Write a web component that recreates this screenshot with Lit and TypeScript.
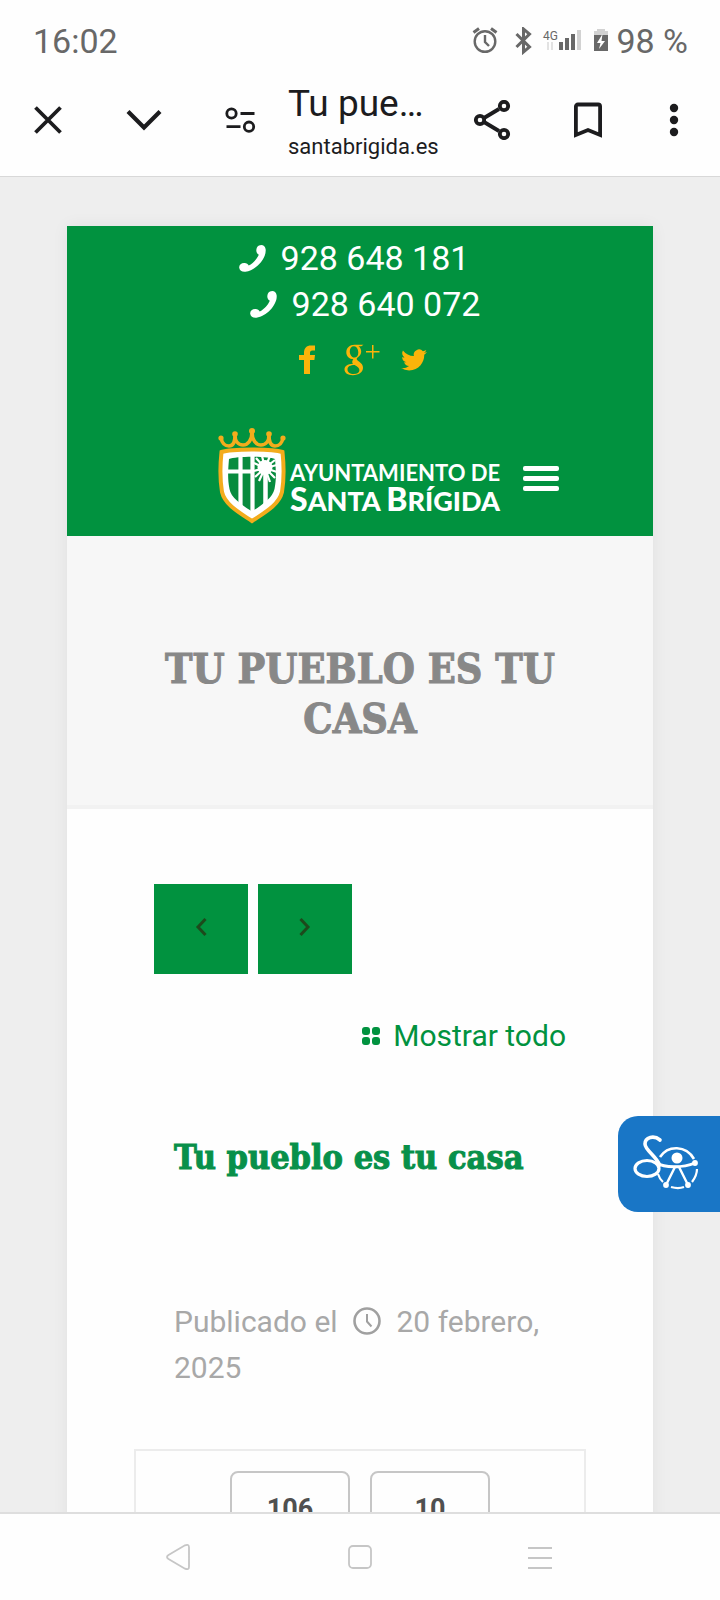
import { LitElement, html, css } from "lit";
import { customElement } from "lit/decorators.js";

const icon = css`
  :host {
    display: block;
  }
  * {
    box-sizing: border-box;
  }
  svg {
    display: block;
    flex: none;
  }
  button {
    border: 0;
    padding: 0;
    margin: 0;
    background: none;
    color: inherit;
    font: inherit;
    display: flex;
    align-items: center;
    justify-content: center;
    cursor: pointer;
  }
  a {
    color: inherit;
    text-decoration: none;
  }
`;

@customElement("status-bar")
class StatusBar extends LitElement {
  static styles = [
    icon,
    css`
      .bar {
        display: flex;
        align-items: center;
        justify-content: space-between;
        height: 64px;
        padding: 18px 32px 0 33px;
        font-size: 34px;
        line-height: 46px;
        color: #686868;
      }
      .icons {
        display: flex;
        align-items: center;
        gap: 8px;
      }
    `,
  ];
  render() {
    return html`
      <div class="bar">
        <time>16:02</time>
        <div class="icons">
          <svg width="136" height="28" viewBox="472 27 136 28" fill="none" stroke="#686868" stroke-width="2.400">
            <circle cx="485" cy="41.500" r="10.300" />
            <path d="M485 35v7l4 4" />
            <path d="M473.500 32.500l5.500-4M496.500 32.500l-5.500-4" stroke-width="3" />
            <path d="M516.500 34l13 13-6 5V29l6 5-13 13" stroke-width="3" />
            <text x="543" y="40" font-family="Roboto, sans-serif" font-size="12" fill="#686868" stroke="none">4G</text>
            <path d="M548 50v-8M552 42v8" stroke="#e2e2e2" stroke-width="2" />
            <g fill="#686868" stroke="none">
              <rect x="559" y="42" width="4" height="8" />
              <rect x="565" y="38" width="4" height="12" />
              <rect x="571" y="34" width="4" height="16" />
              <rect x="577" y="30" width="4" height="20" fill="#d2d2d2" />
              <path d="M594 34h14v17h-14z" />
              <path d="M594 35v-4h3v-2h8v2h3v4z" fill="#d2d2d2" />
              <path d="M602.500 34l-5.500 9h3.500l-1.500 6 6-8h-3.500z" fill="#fff" />
            </g>
          </svg>
          <span>98&nbsp;%</span>
        </div>
      </div>
    `;
  }
}

@customElement("browser-toolbar")
class BrowserToolbar extends LitElement {
  static styles = [
    icon,
    css`
      .bar {
        display: flex;
        height: 113px;
        padding-right: 8px;
        border-bottom: 1px solid #d8d8d8;
        color: #1c1c1e;
      }
      button {
        flex: 0 0 96px;
      }
      .more {
        flex-basis: 76px;
      }
      .page {
        flex: 1;
        min-width: 0;
        display: flex;
        flex-direction: column;
        justify-content: center;
        padding-top: 4px;
      }
      .title {
        font-size: 37px;
        line-height: 46px;
        margin-bottom: 4px;
        white-space: nowrap;
      }
      .site {
        font-size: 22px;
        line-height: 32px;
      }
    `,
  ];
  render() {
    return html`
      <div class="bar">
        <button aria-label="Cerrar">
          <svg width="32" height="32" viewBox="0 0 32 32" stroke="currentColor" stroke-width="3.800">
            <path d="M3.500 3.500l25 25M28.500 3.500l-25 25" />
          </svg>
        </button>
        <button aria-label="Minimizar">
          <svg width="38" height="32" viewBox="0 0 38 32" fill="none" stroke="currentColor" stroke-width="4.200">
            <path d="M3 7.500l16 16 16-16" />
          </svg>
        </button>
        <button aria-label="Información del sitio">
          <svg width="32" height="28" viewBox="0 0 32 28" fill="none" stroke="currentColor" stroke-width="2.800">
            <circle cx="7.500" cy="7.500" r="4.700" />
            <path d="M16.500 7.500h14M2.500 20.700h14" />
            <circle cx="25" cy="20.700" r="4.700" />
          </svg>
        </button>
        <div class="page">
          <span class="title">Tu pue…</span>
          <span class="site">santabrigida.es</span>
        </div>
        <button aria-label="Compartir">
          <svg width="38" height="40" viewBox="0 0 38 40" fill="none" stroke="currentColor" stroke-width="3.800">
            <path d="M11 18l15-9M11 22l15 9" />
            <circle cx="7" cy="20" r="4.200" />
            <circle cx="31" cy="6" r="4.200" />
            <circle cx="31" cy="34" r="4.200" />
          </svg>
        </button>
        <button aria-label="Guardar">
          <svg width="28" height="36" viewBox="0 0 28 36" fill="none" stroke="currentColor" stroke-width="3.800">
            <path d="M1.900 33V4.500a2 2 0 0 1 2-2h20.200a2 2 0 0 1 2 2V33L14 28z" />
          </svg>
        </button>
        <button class="more" aria-label="Más opciones">
          <svg width="10" height="34" viewBox="0 0 10 34" fill="currentColor">
            <circle cx="5" cy="5" r="4.200" />
            <circle cx="5" cy="17" r="4.200" />
            <circle cx="5" cy="29" r="4.200" />
          </svg>
        </button>
      </div>
    `;
  }
}

@customElement("site-header")
class SiteHeader extends LitElement {
  static styles = [
    icon,
    css`
      header {
        background: #01923f;
        color: #fff;
        padding: 9px 0 12px;
      }
      .phone {
        display: flex;
        align-items: center;
        justify-content: center;
        gap: 14px;
        font-size: 34px;
        line-height: 46px;
        padding-right: 12px;
      }
      .phone + .phone {
        padding: 0 0 0 10px;
      }
      .social {
        display: flex;
        align-items: center;
        justify-content: center;
        padding: 17px 0 0 4px;
        gap: 20px;
      }
      .brand {
        display: flex;
        align-items: flex-end;
        justify-content: flex-end;
        padding: 52px 94px 0 0;
      }
      .logo {
        display: flex;
        align-items: center;
        gap: 4px;
      }
      .name {
        display: flex;
        flex-direction: column;
        font-family: Lato, sans-serif;
        font-weight: 700;
        padding-top: 24px;
        width: 213px;
        white-space: nowrap;
      }
      .top {
        font-size: 22px;
        line-height: 24px;
      }
      .town {
        font-size: 27px;
        font-weight: 900;
        line-height: 28px;
      }
      .cap {
        font-size: 32px;
      }
      .menu {
        margin: 0 0 32px 20px;
      }
    `,
  ];
  phone(number: string) {
    return html`
      <a class="phone" href="tel:${number}">
        <svg width="28" height="30" viewBox="0 0 28 30" fill="#fff">
          <path
            d="M20 2.500c3-1.500 6 .2 6.600 3.500C28 15 17 27.500 6.500 28.800 3 29.200.6 27.500.2 24.800c-.3-3 2.300-5 5.500-4.700 1.800.2 3.300 1.200 4 2.500C14 20.500 18 16 19.800 11.800c-1.500-.8-2.500-2.300-2.500-4.200 0-2.200.9-4.200 2.700-5.100z"
          />
        </svg>
        <span>${number}</span>
      </a>
    `;
  }
  render() {
    return html`
      <header>
        ${this.phone("928 648 181")} ${this.phone("928 640 072")}
        <nav class="social" aria-label="Redes sociales">
          <a href="#facebook" aria-label="Facebook">
            <svg width="28" height="32" viewBox="-3 0 28 32" fill="#fbb40a">
              <path d="M5 30V16H0v-5h5V9c0-5 2.500-7.500 7-7.500h4V6.500h-2.500C11.500 6.500 11 7.500 11 9v2h5l-.6 5H11v14z" />
            </svg>
          </a>
          <a href="#google" aria-label="Google Plus">
            <svg width="36" height="32" viewBox="0 0 36 32" fill="#fbb40a">
              <path
                fill-rule="evenodd"
                d="M19.500.8h-9C5.500.8 2.300 4.200 2.300 8.300c0 4 3 6.900 7 6.900-.8 1-1.100 1.800-1.100 2.700 0 .7.300 1.300.8 1.900C3.500 20 .5 22.300.5 25.500c0 3.500 3.300 5.700 8.300 5.700 6.200 0 10.200-3.200 10.200-7.400 0-2.800-1.400-4.500-4-6.400-1.700-1.200-2.300-1.700-2.300-2.500 0-.8.500-1.200 1.500-2 2-1.400 3-3 3-5.300 0-2.300-1-4.200-2.700-5.300h2.800zM10 2.300c2.700 0 4.300 3.300 4.300 6.300 0 3.300-1.500 5-3.900 5-3 0-4.600-3.200-4.600-6.300 0-3 1.500-5 4.200-5zm.6 18.800c3.200 2 4.800 3 4.800 5.100 0 2.300-2 3.800-5.700 3.800-4 0-6.200-1.900-6.200-4.500 0-2.900 2.700-4.400 7.100-4.400z"
              />
              <path d="M22 7h6V1h1.500v6h6v1.500h-6v6H28v-6h-6z" />
            </svg>
          </a>
          <a href="#twitter" aria-label="Twitter">
            <svg width="28" height="32" viewBox="-1 1 26 26" preserveAspectRatio="xMidYMid meet" fill="#fbb40a">
              <path
                d="M24 6.600a9.800 9.800 0 0 1-2.800.8 4.900 4.900 0 0 0 2.200-2.700c-1 .6-2 1-3.100 1.200a4.900 4.900 0 0 0-8.400 4.500A14 14 0 0 1 1.700 5.100a4.900 4.900 0 0 0 1.500 6.600c-.8 0-1.600-.2-2.200-.6v.1a4.900 4.900 0 0 0 4 4.800c-.7.200-1.500.2-2.200.1a4.900 4.900 0 0 0 4.600 3.400A9.900 9.900 0 0 1 0 21.500a14 14 0 0 0 7.500 2.200c9.100 0 14-7.500 14-14v-.6c1-.7 1.800-1.600 2.500-2.500z"
              />
            </svg>
          </a>
        </nav>
        <div class="brand">
          <a class="logo" href="#inicio">
            <svg width="68" height="96" viewBox="0 0 68 96" fill="none">
              <path
                d="M3.500 24c10-3.500 51-3.500 61 0 1.500 14 1.500 28-.5 40-3 13-18 21-30 29C22 85 7 77 4 64 2 52 2 38 3.500 24z"
                fill="#fff" stroke="#f3ac1c" stroke-width="4"
              />
              <path
                d="M11 31c7-3 39-3 46 0 1 12 1.500 20-.5 30C54.500 70 44 77 34 83.500 24 77 13 70 11.500 61c-2-10-1.500-18-.5-30z"
                fill="#078b3e"
              />
              <path d="M22.500 26v54M34.500 26v60M9 43.500h25" stroke="#fff" stroke-width="4.200" />
              <path
                d="M47 40L38 30M47 40l-3-12M47 40l5-12M47 40l10-8M47 40l12-3M47 40l12 4M47 40l10 10M47 40l5 14M47 40v14M47 40l-6 13M47 40l-10 9M47 40l-11 3M47 40l-11-5"
                stroke="#fff" stroke-width="2.200"
              />
              <circle cx="47" cy="39.500" r="7.500" fill="#fff" />
              <path d="M47.500 42v36" stroke="#fff" stroke-width="4.500" />
              <path
                d="M3 10c1 5 4 8 8 8s6-4 6-11c0 6 3 10 8 10s9-5 9-13c0 8 4 13 9 13s8-4 8-10c0 7 2 11 6 11s7-3 8-8"
                stroke="#f3ac1c" stroke-width="3.600" stroke-linejoin="round"
              />
              <g fill="#f3ac1c">
                <circle cx="3" cy="10" r="2.600" />
                <circle cx="17" cy="6" r="2.800" />
                <circle cx="34" cy="3" r="3" />
                <circle cx="51" cy="6" r="2.800" />
                <circle cx="65" cy="10" r="2.600" />
              </g>
            </svg>
            <span class="name">
              <span class="top">AYUNTAMIENTO DE</span>
              <span class="town"><span class="cap">S</span>ANTA <span class="cap">B</span>RÍGIDA</span>
            </span>
          </a>
          <button class="menu" aria-label="Menú">
            <svg width="36" height="26" viewBox="0 0 36 26" fill="#fff">
              <rect width="36" height="5" rx="2" />
              <rect y="10" width="36" height="5" rx="2" />
              <rect y="20" width="36" height="5" rx="2" />
            </svg>
          </button>
        </div>
      </header>
    `;
  }
}

@customElement("system-nav")
class SystemNav extends LitElement {
  static styles = [
    icon,
    css`
      nav {
        display: flex;
        justify-content: center;
        height: 88px;
        border-top: 2px solid #dedede;
        background: #fefefe;
      }
      button {
        width: 25%;
      }
    `,
  ];
  render() {
    return html`
      <nav aria-label="Sistema">
        <button aria-label="Atrás">
          <svg width="28" height="28" viewBox="0 0 28 28" fill="none" stroke="#c6c6c6" stroke-width="1.800">
            <path d="M2.500 12L19 2.300q4-1.500 4 2v19.400q0 3.500-4 2L2.500 16q-3-2 0-4z" />
          </svg>
        </button>
        <button aria-label="Inicio">
          <svg width="24" height="24" viewBox="0 0 24 24" fill="none" stroke="#c6c6c6" stroke-width="1.800">
            <rect x="1" y="1" width="22" height="22" rx="4" />
          </svg>
        </button>
        <button aria-label="Recientes">
          <svg width="24" height="24" viewBox="0 0 24 24" stroke="#c6c6c6" stroke-width="2">
            <path d="M0 3h24M0 13h24M0 23h24" />
          </svg>
        </button>
      </nav>
    `;
  }
}

@customElement("app-root")
class AppRoot extends LitElement {
  static styles = [
    icon,
    css`
      :host {
        display: flex;
        flex-direction: column;
        height: 100vh;
        overflow: hidden;
        background: #fefefe;
        font-family: Roboto, sans-serif;
      }
      .viewport {
        position: relative;
        flex: 1;
        min-height: 0;
        overflow: hidden;
        background: #eeeeee;
        padding: 49px 67px 0;
      }
      .card {
        background: #fefefe;
        min-height: 100%;
        box-shadow: 0 0 16px rgba(0, 0, 0, 0.06);
      }
      h1,
      h2,
      p {
        margin: 0;
      }
      h1,
      h2 {
        font-family: "DejaVu Serif Condensed", "DejaVu Serif", serif;
        font-weight: 700;
        -webkit-text-stroke: 1px currentColor;
      }
      .banner {
        background: #f7f7f7;
        border-bottom: 4px solid #f2f2f2;
        padding: 108px 72px 61px;
      }
      h1 {
        font-size: 41px;
        line-height: 50px;
        text-align: center;
        color: #888888;
      }
      .body {
        padding: 75px 67px 0;
      }
      .pager {
        display: flex;
        gap: 10px;
        padding-left: 20px;
      }
      .pager button {
        width: 94px;
        height: 90px;
        padding-bottom: 4px;
        background: #01923f;
      }
      .all {
        display: flex;
        align-items: center;
        justify-content: flex-end;
        gap: 12px;
        padding: 39px 20px 0 0;
        font-size: 30px;
        line-height: 46px;
        color: #01923f;
      }
      h2 {
        padding: 75px 0 0 40px;
        font-size: 34px;
        line-height: 46px;
        color: #08904a;
        white-space: nowrap;
      }
      .meta {
        padding: 119px 20px 0 40px;
        font-size: 30px;
        line-height: 46px;
        color: #a8a8a8;
      }
      .meta svg {
        display: inline-block;
        vertical-align: -3px;
        margin: 0 8px;
      }
      .stats {
        display: flex;
        justify-content: center;
        gap: 20px;
        margin-top: 58px;
        padding: 20px;
        border: 2px solid #ececec;
      }
      .stat {
        flex: 0 1 120px;
        padding: 18px 0;
        border: 2px solid #c6c6c6;
        border-radius: 8px;
        font-size: 27px;
        line-height: 36px;
        font-weight: 700;
        text-align: center;
        color: #505050;
      }
      .access {
        position: absolute;
        right: 0;
        top: 939px;
        width: 102px;
        height: 96px;
        border-radius: 20px 0 0 20px;
        background: #1976c6;
      }
    `,
  ];
  render() {
    return html`
      <status-bar></status-bar>
      <browser-toolbar></browser-toolbar>
      <main class="viewport">
        <div class="card">
          <site-header></site-header>
          <div class="banner"><h1>TU PUEBLO ES TU CASA</h1></div>
          <article class="body">
            <div class="pager">
              <button aria-label="Anterior">
                <svg width="12" height="20" viewBox="0 0 12 20" fill="none" stroke="#1d4a1c" stroke-width="3">
                  <path d="M10.500 2L3 10l7.500 8" />
                </svg>
              </button>
              <button aria-label="Siguiente">
                <svg width="12" height="20" viewBox="0 0 12 20" fill="none" stroke="#1d4a1c" stroke-width="3">
                  <path d="M1.500 2L9 10l-7.500 8" />
                </svg>
              </button>
            </div>
            <a class="all" href="#todo">
              <svg width="20" height="20" viewBox="0 0 20 20" fill="#01923f">
                <rect x="1" y="1" width="8" height="8" rx="3" />
                <rect x="11" y="1" width="8" height="8" rx="3" />
                <rect x="1" y="11" width="8" height="8" rx="3" />
                <rect x="11" y="11" width="8" height="8" rx="3" />
              </svg>
              <span>Mostrar todo</span>
            </a>
            <h2>Tu pueblo es tu casa</h2>
            <p class="meta">
              Publicado el
              <svg width="28" height="28" viewBox="0 0 28 28" fill="none" stroke="#a0a0a0" stroke-width="2.600">
                <circle cx="14" cy="14" r="12.500" />
                <path d="M14 7v7.500l4.500 5" stroke-width="2" />
              </svg>
              20 febrero, 2025
            </p>
            <div class="stats">
              <div class="stat">106</div>
              <div class="stat">10</div>
            </div>
          </article>
        </div>
        <button class="access" aria-label="Accesibilidad">
          <svg width="72" height="60" viewBox="-1 -1 72 60" fill="none" stroke="#fff">
            <ellipse cx="13" cy="33.500" rx="12" ry="8" stroke-width="3.200" />
            <path d="M26 5C20 0 11 2 11 9c0 6 12 13 14.500 21" stroke-width="3.600" stroke-linecap="round" />
            <path d="M23 28c7 5 26 5 38 0" stroke-width="2.800" />
            <path d="M26 22c8-12 26-12 34 2" stroke-width="2.600" />
            <path d="M63 34c0 5-2 9-5 13M50 52c-4 1.500-8 1.500-13 0M29 47c-3-2.500-4-5-5-8" stroke-width="2.200" />
            <circle cx="43" cy="23" r="5.500" fill="#fff" stroke="none" />
            <path d="M32 50l9-18h4l9 18" stroke-width="2.400" />
            <g fill="#fff" stroke="none">
              <circle cx="61" cy="28" r="2.900" />
              <circle cx="32" cy="50" r="2.900" />
              <circle cx="54" cy="50" r="2.900" />
            </g>
          </svg>
        </button>
      </main>
      <system-nav></system-nav>
    `;
  }
}
